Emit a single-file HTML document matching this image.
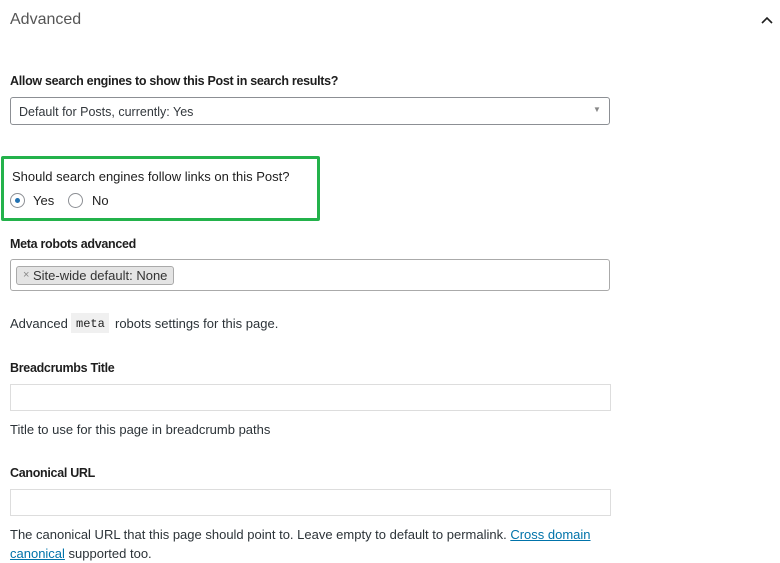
<!DOCTYPE html>
<html><head><meta charset="utf-8"><style>
body{margin:0;width:780px;height:563px;background:#fff;font-family:"Liberation Sans",sans-serif;font-size:12.5px;color:#1e1e1e;position:relative;overflow:hidden}
.a{position:absolute;white-space:nowrap}
.lbl{font-weight:bold;font-size:12.5px;color:#1e1e1e;letter-spacing:-0.3px}
.box{position:absolute;box-sizing:border-box;border:1px solid #ddd;background:#fff}
.txt{color:#2c3338;font-size:13px}
</style></head><body>
<div class="a" style="left:10px;top:11px;font-size:16px;color:#555">Advanced</div>
<svg class="a" style="left:760px;top:15px" width="14" height="10" viewBox="0 0 14 10"><path d="M2 8 L7 3 L12 8" fill="none" stroke="#1e1e1e" stroke-width="1.6"/></svg>

<div class="a lbl" style="left:10px;top:74px">Allow search engines to show this Post in search results?</div>
<div class="box" style="left:10px;top:97px;width:600px;height:28px;border-color:#8c8f94;border-radius:3px"></div>
<div class="a" style="left:19px;top:105px;color:#32373c">Default for Posts, currently: Yes</div>
<div class="a" style="left:593px;top:105px;font-size:8px;color:#888">▼</div>

<div class="box" style="left:1px;top:156px;width:319px;height:65px;border:3px solid #23b24b;border-radius:2px;background:transparent"></div>
<div class="a" style="left:12px;top:169px;color:#1e1e1e;font-size:13px">Should search engines follow links on this Post?</div>
<div class="a" style="left:10px;top:193px;width:15px;height:15px;border:1px solid #8c8f94;border-radius:50%;box-sizing:border-box"></div>
<div class="a" style="left:15px;top:198px;width:5px;height:5px;background:#2271b1;border-radius:50%"></div>
<div class="a" style="left:33px;top:193px;font-size:13px">Yes</div>
<div class="a" style="left:68px;top:193px;width:15px;height:15px;border:1px solid #8c8f94;border-radius:50%;box-sizing:border-box"></div>
<div class="a" style="left:92px;top:193px;font-size:13px">No</div>

<div class="a lbl" style="left:10px;top:237px">Meta robots advanced</div>
<div class="box" style="left:10px;top:259px;width:600px;height:32px;border-color:#aaa;border-radius:3px"></div>
<div class="box" style="left:16px;top:266px;width:158px;height:19px;background:#e4e4e4;border-color:#aaa;border-radius:3px"></div>
<div class="a" style="left:23px;top:269px;color:#888;font-size:11px">×</div>
<div class="a" style="left:33px;top:268px;color:#333;font-size:13px">Site-wide default: None</div>

<div class="a" style="left:71px;top:313px;width:38px;height:20px;background:#f0f0f0"></div>
<div class="a txt" style="left:10px;top:316px">Advanced</div>
<div class="a" style="left:76px;top:317px;font-family:'Liberation Mono',monospace;font-size:12px">meta</div>
<div class="a txt" style="left:115px;top:316px">robots settings for this page.</div>

<div class="a lbl" style="left:10px;top:361px">Breadcrumbs Title</div>
<div class="box" style="left:10px;top:384px;width:601px;height:27px"></div>
<div class="a txt" style="left:10px;top:422px">Title to use for this page in breadcrumb paths</div>

<div class="a lbl" style="left:10px;top:466px">Canonical URL</div>
<div class="box" style="left:10px;top:489px;width:601px;height:27px"></div>
<div class="a txt" style="left:10px;top:527px">The canonical URL that this page should point to. Leave empty to default to permalink. <span style="color:#0073aa;text-decoration:underline">Cross domain</span></div>
<div class="a txt" style="left:10px;top:546px"><span style="color:#0073aa;text-decoration:underline">canonical</span> supported too.</div>
</body></html>
